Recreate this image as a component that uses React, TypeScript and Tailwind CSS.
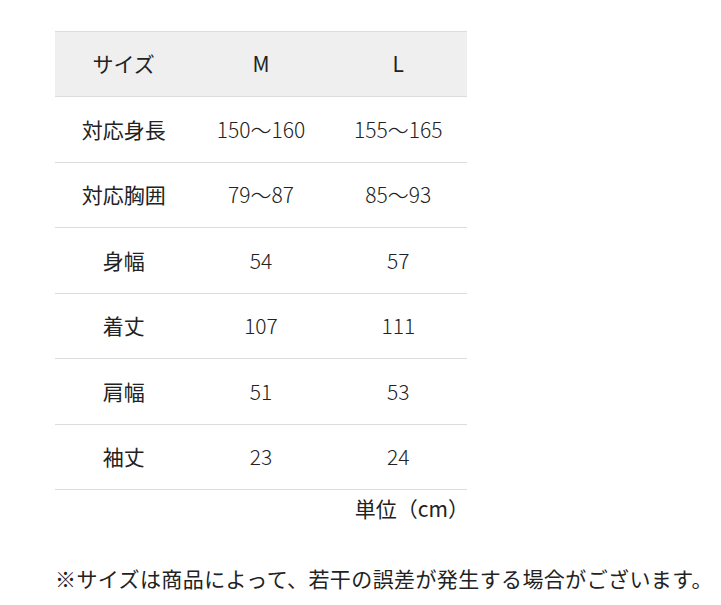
const rows: [string, string, string][] = [
  ["対応身長", "150～160", "155～165"],
  ["対応胸囲", "79～87", "85～93"],
  ["身幅", "54", "57"],
  ["着丈", "107", "111"],
  ["肩幅", "51", "53"],
  ["袖丈", "23", "24"],
];

export default function App() {
  return (
    <div
      className="min-h-[605px] w-[721px] bg-white pl-[55px] pt-[31px] text-[21px] text-[#222]"
      style={{ fontFamily: '"Noto Sans CJK JP", sans-serif' }}
    >
      <div className="w-[412px]">
        <div className="grid h-[66px] grid-cols-3 items-center border-y border-[#dcdcdc] bg-[#efefef] text-center">
          <div>サイズ</div>
          <div>M</div>
          <div>L</div>
        </div>
        {rows.map(([label, m, l]) => (
          <div
            key={label}
            className="grid h-[65.5px] grid-cols-3 items-center border-b border-[#dcdcdc] text-center"
          >
            <div>{label}</div>
            <div className="font-light">{m}</div>
            <div className="font-light">{l}</div>
          </div>
        ))}
        <div className="-mr-[2px] text-right leading-[36px]">単位（cm）</div>
      </div>
      <p className="mt-[37px] leading-[30px] tracking-[0.4px]">※サイズは商品によって、若干の誤差が発生する場合がございます。</p>
    </div>
  );
}
